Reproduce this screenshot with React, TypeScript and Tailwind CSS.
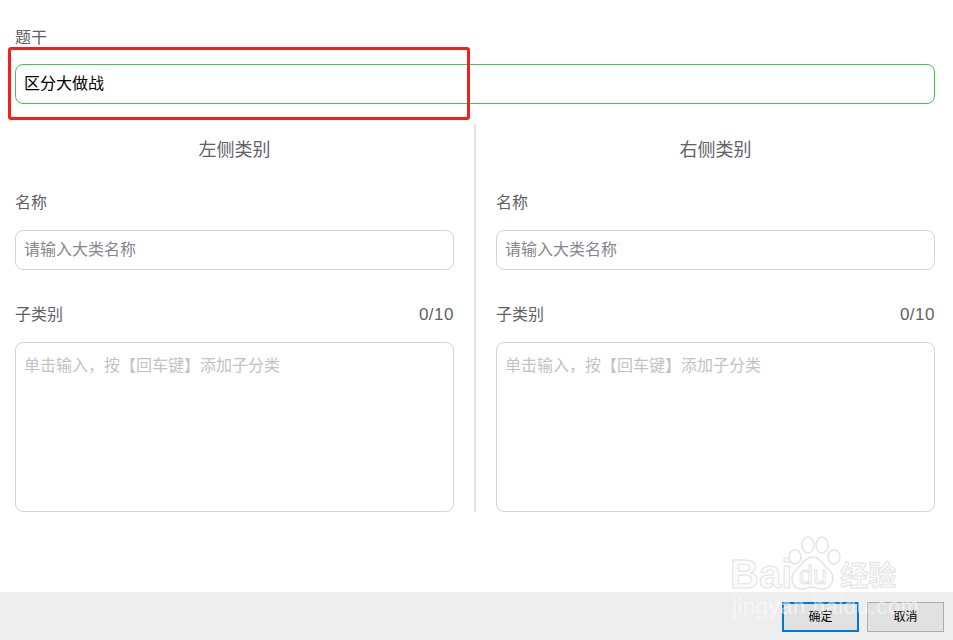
const font = "font-['Liberation_Sans','Noto_Sans_CJK_SC',sans-serif]";

function Column({ title }: { title: string }) {
  return (
    <div className="flex w-[439px] flex-col">
      <h3 className="h-[52px] pt-[13px] text-center text-[18px] leading-[26px] font-normal text-[#606266]">
        {title}
      </h3>
      <label className="mt-[15px] text-[16px] leading-[24px] text-[#606266]">名称</label>
      <input
        className="mt-[15px] h-[40px] rounded-[8px] border border-[#d3d3da] px-[8px] text-[16px] outline-none placeholder:text-[#84878d]"
        placeholder="请输入大类名称"
      />
      <div className="mt-[33px] flex items-center justify-between text-[16px] leading-[24px] text-[#606266]">
        <span>子类别</span>
        <span className="text-[17px] tracking-[0.5px]">0/10</span>
      </div>
      <textarea
        className="mt-[15px] h-[170px] resize-none rounded-[8px] border border-[#d3d3da] px-[8px] py-[12px] text-[16px] leading-[22px] outline-none placeholder:text-[#c2c2c6]"
        placeholder="单击输入，按【回车键】添加子分类"
      />
    </div>
  );
}

function Watermark() {
  return (
    <div className="pointer-events-none absolute top-[535px] left-[730px] h-[95px] w-[180px] select-none">
      <div className="flex h-[57px] items-end">
        <span className="font-['Liberation_Sans',sans-serif] text-[40px] leading-[36px] font-bold text-[#fbfbfb] [-webkit-text-stroke:1px_#e4e4e4]">
          Bai
        </span>
        <svg width="58" height="56" viewBox="0 0 58 56" className="-ml-[8px] -mr-[2px]">
          <g fill="#fff" stroke="#e4e4e4" strokeWidth="1.5">
            <ellipse cx="11" cy="21" rx="6" ry="7" />
            <ellipse cx="24" cy="9" rx="6" ry="8" />
            <ellipse cx="38" cy="9" rx="6" ry="8" />
            <ellipse cx="50" cy="21" rx="6" ry="7" />
            <path d="M29 21c7 0 10 8 16 13 7 6 4 20-8 19-4 0-6-2-9-2s-5 2-10 2C7 53 5 40 12 34c6-5 9-13 17-13z" />
          </g>
          <text x="29" y="48" textAnchor="middle" fontSize="25" fontFamily="Liberation Sans" fill="#fff" stroke="#dedede" strokeWidth="0.8">
            du
          </text>
        </svg>
        <span className="text-[28px] leading-[30px] font-bold text-[#fbfbfb] [-webkit-text-stroke:1px_#e4e4e4]">经验</span>
      </div>
      <div className="mt-[1px] pl-[2px] font-['Liberation_Sans',sans-serif] text-[22px] leading-[28px] tracking-[0.6px] text-white/50">
        jingyan.baidu.com
      </div>
    </div>
  );
}

export default function App() {
  return (
    <div className={`relative flex h-[640px] w-[953px] flex-col overflow-hidden bg-white ${font}`}>
      <div className="flex-1 px-[15px] pt-[26px]">
        <label className="block text-[16px] leading-[24px] text-[#606266]">题干</label>
        <input
          className="mt-[14px] block h-[40px] w-[920px] rounded-[8px] border border-[#3fc552] px-[8px] pb-[4px] text-[16px] text-black outline-none"
          defaultValue="区分大做战"
        />
        <div className="mt-[20px] flex w-[920px] justify-between">
          <Column title="左侧类别" />
          <div className="w-[2px] bg-[#e3e3e3]" />
          <Column title="右侧类别" />
        </div>
      </div>

      <footer className="flex h-[48px] items-start justify-end gap-[8px] bg-[#eeeeee] pt-[10px] pr-[9px]">
        <button className="h-[30px] w-[77px] border-2 border-[#0078d7] bg-[#e1e1e1] text-[12px] text-black">确定</button>
        <button className="h-[30px] w-[77px] border border-[#adadad] bg-[#e1e1e1] text-[12px] text-black">取消</button>
      </footer>

      {/* red annotation box drawn over the screenshot */}
      <div className="pointer-events-none absolute top-[47px] left-[8px] h-[73px] w-[462px] rounded-[3px] border-[3px] border-[#f5201a]" />
      <Watermark />
    </div>
  );
}
